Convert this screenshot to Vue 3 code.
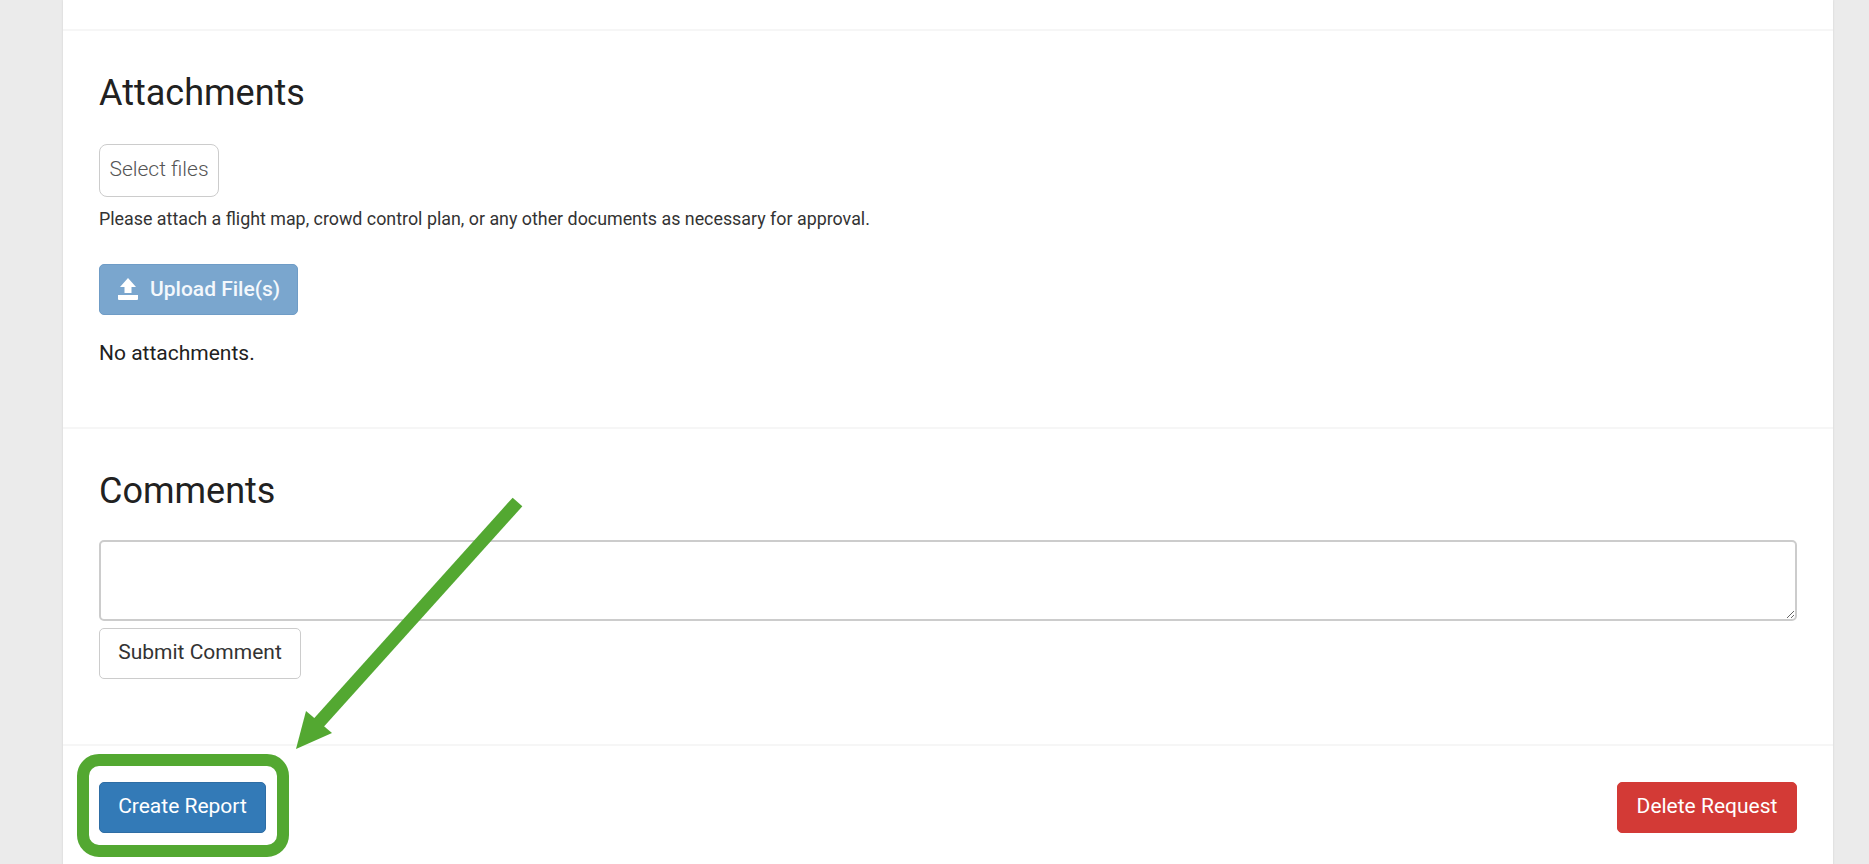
<template>
  <div class="page">
    <main class="card">
      <section class="panel top-stub"></section>

      <section class="panel attachments">
        <h3>Attachments</h3>
        <button class="select-btn">Select files</button>
        <p class="hint">Please attach a flight map, crowd control plan, or any other documents as necessary for approval.</p>
        <button class="btn upload">
          <svg class="up-icon" viewBox="0 0 22 22" width="22" height="22">
            <path d="M11 0 L19 9 H14.5 V15 H7.5 V9 H3 Z M1 17 H21 V21 Q21 22 20 22 H2 Q1 22 1 21 Z" fill="#fff" />
          </svg>
          Upload File(s)
        </button>
        <p class="empty">No attachments.</p>
      </section>

      <section class="panel comments">
        <h3>Comments</h3>
        <textarea class="comment-box"></textarea>
        <button class="btn plain">Submit Comment</button>
      </section>

      <section class="panel actions">
        <button class="btn primary">Create Report</button>
        <button class="btn danger">Delete Request</button>
      </section>
    </main>

    <!-- screenshot annotation on top of the page -->
    <svg class="annotation" width="1869" height="864" viewBox="0 0 1869 864">
      <rect x="83" y="760" width="200" height="91" rx="16" fill="none" stroke="#53a831" stroke-width="12" />
      <path d="M517.5 502 L314 728" fill="none" stroke="#53a831" stroke-width="13" />
      <path d="M296 749 L306 711 L332 733 Z" fill="#53a831" />
    </svg>
  </div>
</template>

<script setup>
</script>

<style>
html,
body {
  margin: 0;
  background: #ebebeb;
  overflow: hidden;
}
</style>

<style scoped>
.page {
  position: relative;
  width: 1869px;
  height: 864px;
  overflow: hidden;
  background: #ebebeb;
  font-family: Roboto, "Liberation Sans", sans-serif;
  color: #212121;
}
.annotation {
  position: absolute;
  left: 0;
  top: 0;
}
.card {
  margin: 0 36px 0 63px;
  background: #fff;
  box-shadow: 0 0 2px #cfcfcf;
}
.panel {
  border-bottom: 2px solid #f6f6f6;
  padding: 0 36px;
}
.top-stub {
  height: 29px;
  padding: 0;
}
.attachments {
  height: 398px;
  box-sizing: border-box;
  padding-top: 41px;
}
h3 {
  margin: 0;
  font-size: 36px;
  font-weight: 400;
  line-height: 42px;
}
.select-btn {
  display: block;
  box-sizing: border-box;
  width: 120px;
  height: 53px;
  margin-top: 30px;
  padding: 0 0 4px;
  background: #fff;
  border: 1px solid #ccc;
  border-radius: 8px;
  font-family: inherit;
  font-size: 21px;
  font-weight: 300;
  color: #555;
}
.hint {
  margin: 12px 0 0;
  font-size: 17.85px;
  line-height: 20px;
  color: #333;
}
.btn {
  box-sizing: border-box;
  height: 51px;
  padding: 0 0 3px;
  border: 1px solid transparent;
  border-radius: 5px;
  font-family: inherit;
  font-size: 21px;
  font-weight: 400;
}
.upload {
  display: flex;
  align-items: center;
  gap: 11px;
  width: 199px;
  margin-top: 35px;
  padding: 0 0 2px 17px;
  background: #7aa6ce;
  border-color: #6f9cc6;
  color: #f4f8fc;
  font-weight: 500;
}
.up-icon {
  flex: none;
}
.empty {
  margin: 25px 0 0;
  font-size: 21px;
  line-height: 26px;
}
.comments {
  height: 317px;
  box-sizing: border-box;
  padding-top: 41px;
}
.comment-box {
  display: block;
  box-sizing: border-box;
  width: 100%;
  height: 81px;
  margin-top: 28px;
  background: #fff;
  border: 2px solid #ccc;
  border-radius: 5px;
  resize: both;
}
.plain {
  display: block;
  width: 202px;
  margin-top: 7px;
  background: #fff;
  border-color: #ccc;
  color: #333;
}
.actions {
  display: flex;
  justify-content: space-between;
  padding-top: 36px;
  padding-bottom: 40px;
  border-bottom: 0;
}
.primary {
  width: 167px;
  padding-bottom: 4px;
  background: #337ab7;
  border-color: #2e6da4;
  color: #fff;
}
.danger {
  width: 180px;
  padding-bottom: 4px;
  background: #d33a36;
  border-color: #d33a36;
  color: #fff;
}
</style>
